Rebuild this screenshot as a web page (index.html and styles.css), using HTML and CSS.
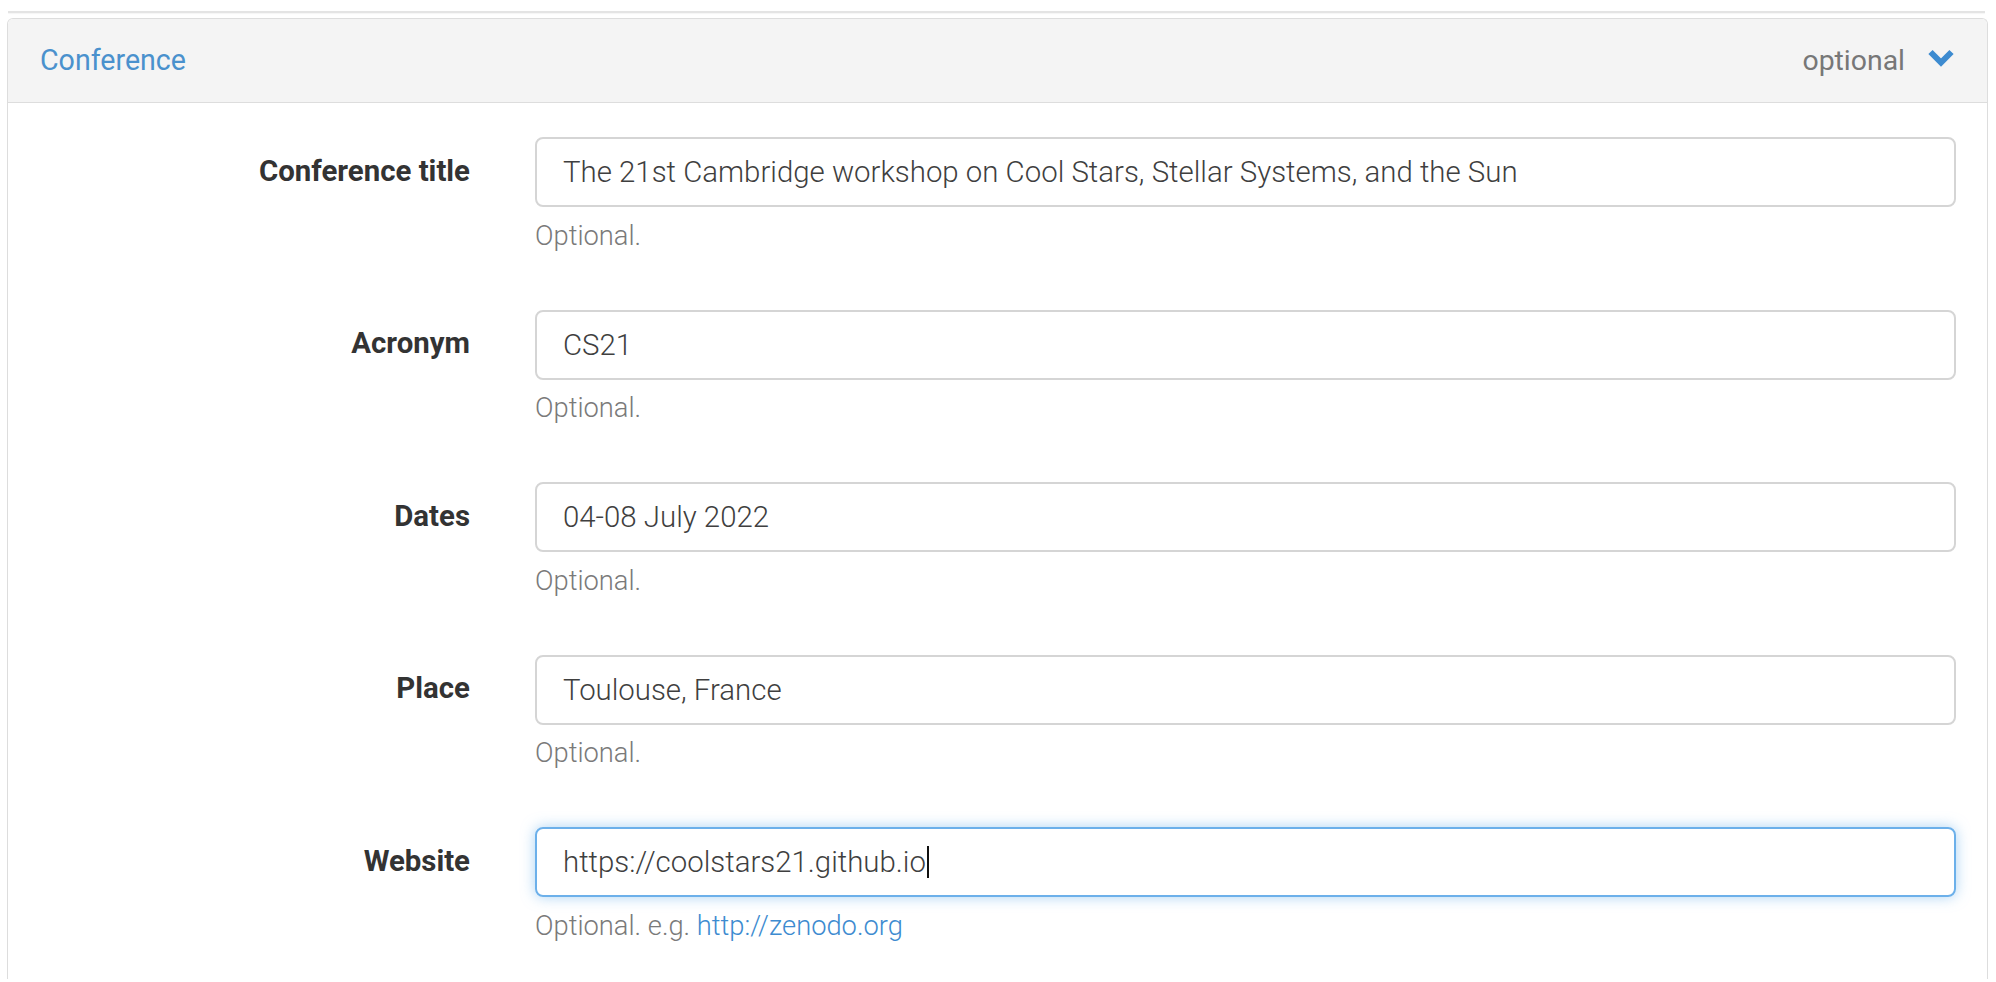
FILE: index.html
```html
<!DOCTYPE html>
<html lang="en">
<head>
<meta charset="utf-8">
<title>Conference</title>
<link rel="stylesheet" href="styles.css">
</head>
<body>
<div class="prev-edge"></div>
<section class="panel">
  <header class="panel-heading">
    <a class="panel-title" href="#">Conference</a>
    <div class="panel-meta">
      <span class="meta-text">optional</span>
      <svg class="chevron" width="28" height="19" viewBox="0 0 28 19" aria-hidden="true">
        <polyline points="3.5,4 14,14.5 24.5,4" fill="none" stroke="#3d8bd0" stroke-width="6" stroke-linejoin="miter"/>
      </svg>
    </div>
  </header>
  <div class="panel-body">
    <div class="form-row">
      <label class="control-label">Conference title</label>
      <div class="control-col">
        <div class="form-control">The 21st Cambridge workshop on Cool Stars, Stellar Systems, and the Sun</div>
        <p class="help-block">Optional.</p>
      </div>
    </div>
    <div class="form-row">
      <label class="control-label">Acronym</label>
      <div class="control-col">
        <div class="form-control">CS21</div>
        <p class="help-block">Optional.</p>
      </div>
    </div>
    <div class="form-row">
      <label class="control-label">Dates</label>
      <div class="control-col">
        <div class="form-control">04-08 July 2022</div>
        <p class="help-block">Optional.</p>
      </div>
    </div>
    <div class="form-row">
      <label class="control-label">Place</label>
      <div class="control-col">
        <div class="form-control">Toulouse, France</div>
        <p class="help-block">Optional.</p>
      </div>
    </div>
    <div class="form-row">
      <label class="control-label">Website</label>
      <div class="control-col">
        <div class="form-control focused">https://coolstars21.github.io<span class="caret"></span></div>
        <p class="help-block">Optional. e.g. <a href="#">http://zenodo.org</a></p>
      </div>
    </div>
  </div>
</section>
</body>
</html>
```
FILE: styles.css
```css
html, body {
  margin: 0;
  padding: 0;
  background: #ffffff;
  height: 982px;
  overflow: hidden;
}
body {
  font-family: Roboto, "Liberation Sans", Arial, sans-serif;
  color: #333333;
  padding-top: 11px;
}
.prev-edge {
  height: 2px;
  margin: 0 11px 0 8px;
  background: #e4e4e4;
  box-shadow: 0 1px 1px rgba(0,0,0,0.04);
}
.panel {
  margin: 5px 8px 0 7px;
  border: 1px solid #dddddd;
  border-bottom: 0;
  border-radius: 6px 6px 0 0;
  background: #ffffff;
}
.panel-heading {
  height: 83px;
  background: #f4f4f4;
  border-bottom: 1px solid #dddddd;
  border-radius: 5px 5px 0 0;
  display: flex;
  align-items: center;
  justify-content: space-between;
  padding: 0 32px 0 32px;
}
.panel-title {
  font-size: 28.6px;
  color: #4a91cd;
  text-decoration: none;
  padding-bottom: 1px;
}
.panel-meta {
  display: flex;
  align-items: center;
  gap: 22px;
}
.meta-text {
  font-size: 28.4px;
  color: #777777;
  padding-bottom: 1px;
}
.chevron {
  display: block;
  margin-top: -7px;
}
.panel-body {
  padding: 34px 31px 34px 0;
  display: flex;
  flex-direction: column;
  gap: 55px;
}
.form-row {
  display: grid;
  grid-template-columns: 462px 1fr;
  column-gap: 65px;
}
.control-label {
  font-weight: 700;
  font-size: 29.4px;
  line-height: 38px;
  text-align: right;
  padding-top: 14.5px;
  color: #333333;
}
.control-col {
  min-width: 0;
}
.form-control {
  box-sizing: border-box;
  height: 70px;
  border: 2px solid #d5d5d5;
  border-radius: 8px;
  padding: 0 26px;
  display: flex;
  align-items: center;
  font-size: 29.4px;
  font-weight: 300;
  line-height: 38px;
  color: #3f3f3f;
  white-space: nowrap;
  overflow: hidden;
}
.form-control.focused {
  border-color: #6cb0ea;
  box-shadow: 0 0 14px rgba(102, 175, 233, 0.55);
  overflow: visible;
}
.caret {
  display: inline-block;
  width: 2px;
  height: 32px;
  background: #111111;
  margin-left: 1px;
}
.help-block {
  margin: 9.5px 0 0 0;
  font-size: 27.3px;
  font-weight: 300;
  line-height: 38px;
  color: #7a7a7a;
}
.help-block a {
  color: #3d8bd0;
  text-decoration: none;
}
```
